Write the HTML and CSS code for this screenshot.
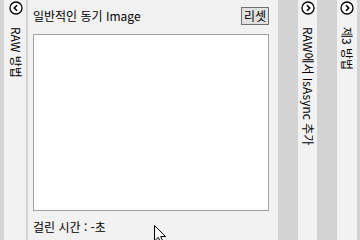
FILE: index.html
```html
<!DOCTYPE html>
<html lang="ko">
<head>
  <meta charset="UTF-8">
  <meta name="viewport" content="width=device-width, initial-scale=1.0">
  <title>동기 Image</title>
  <link rel="stylesheet" href="styles.css">
</head>
<body>

  <!-- 접힌 패널: RAW 방법 -->
  <div class="strip strip-left">
    <span class="toggle">
      <svg width="14" height="14" viewBox="0 0 14 14"><circle cx="7" cy="7" r="6" fill="#fff" stroke="#000" stroke-width="1.3"/><path d="M8 4.2 L5.3 7 L8 9.8" fill="none" stroke="#000" stroke-width="1.6"/></svg>
    </span>
    <span class="strip-title">RAW 방법</span>
  </div>

  <!-- 메인 패널 -->
  <div class="panel">
    <div class="panel-head">
      <span class="panel-title">일반적인 동기 Image</span>
      <button class="reset">리셋</button>
    </div>
    <div class="image-box"></div>
    <div class="elapsed">걸린 시간 : -초</div>
  </div>

  <div class="strip strip-mid">
    <span class="toggle">
      <svg width="14" height="14" viewBox="0 0 14 14"><circle cx="7" cy="7" r="6" fill="#fff" stroke="#000" stroke-width="1.3"/><path d="M6 4.2 L8.7 7 L6 9.8" fill="none" stroke="#000" stroke-width="1.6"/></svg>
    </span>
    <span class="strip-title">RAW에서 IsAsync 추가</span>
  </div>

  <div class="strip strip-right">
    <span class="toggle">
      <svg width="14" height="14" viewBox="0 0 14 14"><circle cx="7" cy="7" r="6" fill="#fff" stroke="#000" stroke-width="1.3"/><path d="M6 4.2 L8.7 7 L6 9.8" fill="none" stroke="#000" stroke-width="1.6"/></svg>
    </span>
    <span class="strip-title">제3 방법</span>
  </div>

  <!-- 마우스 커서 -->
  <svg class="cursor" width="13" height="20" viewBox="0 0 13 20"><path d="M0.5 0.5 L0.5 16 L4.3 12.4 L7 18.5 L9.3 17.5 L6.7 11.5 L11.5 11.5 Z" fill="#fff" stroke="#000" stroke-width="1"/></svg>

</body>
</html>
```

FILE: styles.css
```css
* {
  box-sizing: border-box;
}

body {
  margin: 0;
  height: 240px;
  display: flex;
  background: #d3d3d3;
  font-family: "Noto Sans CJK KR", "Noto Sans", sans-serif;
  font-size: 12px;
  color: #000;
  overflow: hidden;
  position: relative;
}

.strip {
  background: #f2f2f2;
  display: flex;
  flex-direction: column;
  align-items: center;
  padding-top: 0;
}

.strip-left {
  width: 22px;
  margin-left: 4px;
  margin-right: 2px;
  padding-left: 2px;
}

.strip-mid {
  width: 19px;
  margin-left: 20px;
}

.strip-right {
  width: 20px;
  margin-left: 20px;
}

.toggle {
  height: 15px;
  display: flex;
  align-items: center;
}

.toggle svg {
  display: block;
}

.strip-title {
  margin-top: 12px;
  writing-mode: vertical-rl;
  text-orientation: sideways;
  line-height: 14px;
  white-space: nowrap;
}

.panel {
  width: 250px;
  background: #f2f2f2;
  padding: 7px 9px 0 5px;
  display: flex;
  flex-direction: column;
}

.panel-head {
  display: flex;
  justify-content: space-between;
  align-items: center;
  height: 18px;
}

.panel-title {
  line-height: 16px;
}

.reset {
  font: inherit;
  height: 18px;
  padding: 0 2px;
  line-height: 14px;
  background: #e1e1e1;
  border: 1px solid #707070;
  color: #000;
}

.image-box {
  margin-top: 9px;
  height: 177px;
  background: #fff;
  border: 1px solid #a0a0a0;
}

.elapsed {
  margin-top: 8px;
  line-height: 16px;
}

.cursor {
  position: absolute;
  left: 154px;
  top: 225px;
}
```
